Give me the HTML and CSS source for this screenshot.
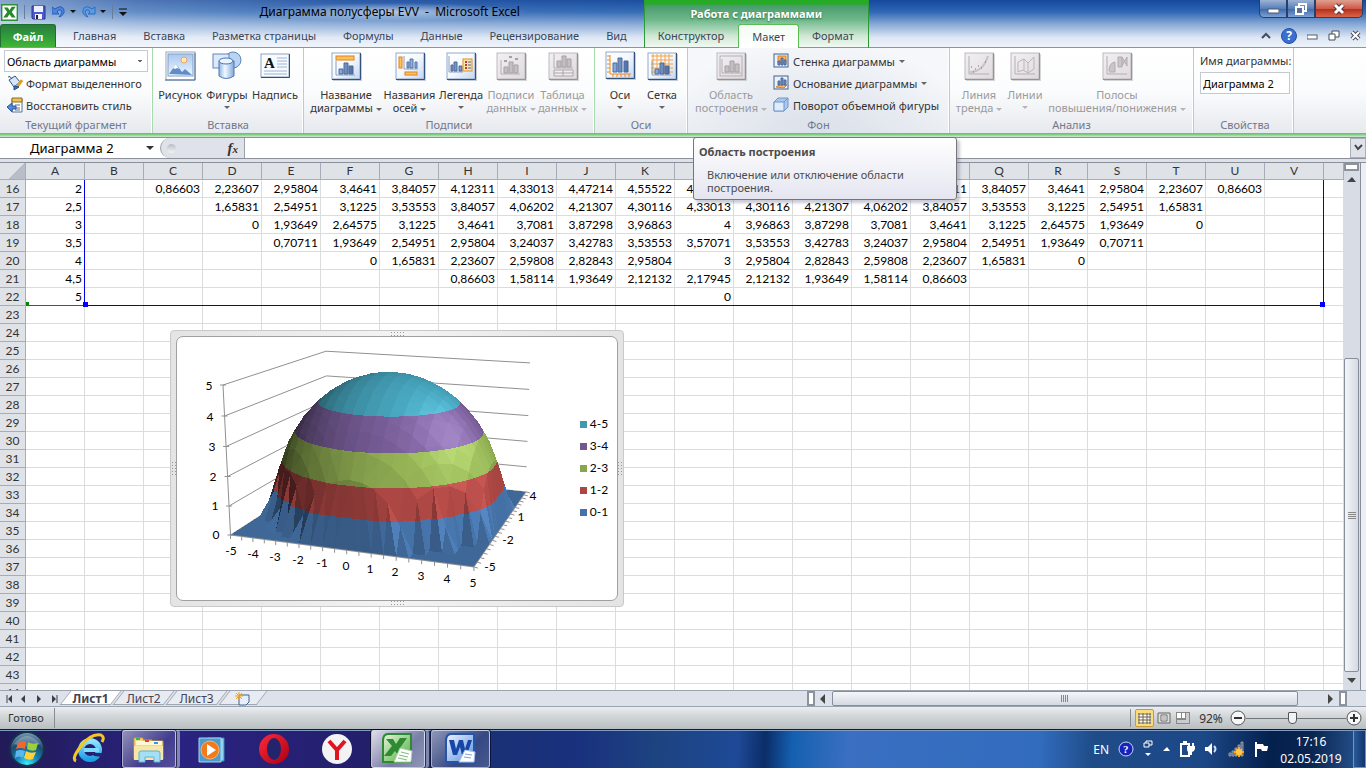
FILE: index.html
```html
<!DOCTYPE html>
<html lang="ru">
<head>
<meta charset="utf-8">
<title>Диаграмма полусферы EVV - Microsoft Excel</title>
<link rel="stylesheet" href="styles.css">
</head>
<body>
<svg class="defs" aria-hidden="true">
  <defs>
    <linearGradient id="gFrame" x1="0" y1="0" x2="1" y2="1"><stop offset="0" stop-color="#fff"/><stop offset=".5" stop-color="#f4f8fd"/><stop offset="1" stop-color="#c3d6f2"/></linearGradient>
    <linearGradient id="gOff" x1="0" y1="0" x2="1" y2="1"><stop offset="0" stop-color="#f3f0f3"/><stop offset="1" stop-color="#dedade"/></linearGradient>
    <linearGradient id="gBar" x1="0" y1="0" x2="1" y2="0"><stop offset="0" stop-color="#8fb0dc"/><stop offset="1" stop-color="#4d6ca3"/></linearGradient>
    <linearGradient id="gSky" x1="0" y1="0" x2="0" y2="1"><stop offset="0" stop-color="#a9c8f0"/><stop offset="1" stop-color="#eef6ff"/></linearGradient>
    <linearGradient id="gCyl" x1="0" y1="0" x2="1" y2="0"><stop offset="0" stop-color="#8fb4e3"/><stop offset=".4" stop-color="#f3f8ff"/><stop offset="1" stop-color="#7fa8dd"/></linearGradient>
    <linearGradient id="gX" x1="0" y1="0" x2="1" y2="1"><stop offset="0" stop-color="#e5f5dc"/><stop offset="1" stop-color="#4fae3c"/></linearGradient>
    <linearGradient id="gW" x1="0" y1="0" x2="1" y2="1"><stop offset="0" stop-color="#eef5ff"/><stop offset="1" stop-color="#5b8fdc"/></linearGradient>
    <radialGradient id="gOrb" cx=".5" cy=".95" r=".9"><stop offset="0" stop-color="#3ff0ff"/><stop offset=".35" stop-color="#1489bb"/><stop offset=".7" stop-color="#1d4a70"/><stop offset="1" stop-color="#6f93ad"/></radialGradient>
    <linearGradient id="gIE" x1="0" y1="0" x2="0" y2="1"><stop offset="0" stop-color="#8fe4ff"/><stop offset="1" stop-color="#1d9fe8"/></linearGradient>
    <linearGradient id="gOpera" x1="0" y1="0" x2="1" y2="1"><stop offset="0" stop-color="#ff2a39"/><stop offset="1" stop-color="#a80012"/></linearGradient>
    <g id="frame"><rect x="2" y="2" width="29" height="27" fill="#7f93ad" opacity=".45"/><rect x="1" y="1" width="28" height="26" fill="url(#gFrame)" stroke="#8da9cb"/><path d="M29.500 1V27.500H1" fill="none" stroke="#31527b"/></g>
    <g id="frameOff"><rect x="2" y="2" width="29" height="27" fill="#999" opacity=".4"/><rect x="1" y="1" width="28" height="26" fill="url(#gOff)" stroke="#bdb9bd"/><path d="M29.500 1V27.500H1" fill="none" stroke="#969296"/></g>
    <g id="bars"><path d="M0 0V14H19" fill="none" stroke="#8aa0bf"/><path d="M3 8h4v5h-4zM8 2h4v11h-4zM13 5h4v8h-4z" fill="url(#gBar)" stroke="#4c6898"/></g>
    <g id="barsOff"><path d="M0 0V14H19" fill="none" stroke="#b3afb3"/><path d="M3 7h4v6h-4zM8 2h4v11h-4zM13 5h4v8h-4z" fill="#c3bfc3" stroke="#a5a1a5"/></g>
    <g id="xl"><path d="M6 1H29V29H1V8Q1 1 6 1z" fill="url(#gX)" stroke="#2c8a32" stroke-width="2"/><path d="M4 6h7l3 5 4-6h7l-7 10 4 7h-6l-3-4-4 5H2l8-10z" fill="#2f8b31"/><path d="M18 15l12 3-1 11H12z" fill="#fff" stroke="#a9cfa5"/><path d="M19 19l8 2M17 22l9 2M16 25l9 2" stroke="#7dbb77"/></g>
  </defs>
</svg>

<header class="window-head">
  <div class="title-row">
    <div class="qat">
      <svg width="17" height="17" viewBox="0 0 30 30"><path d="M1 1H29V29H1z" fill="#fff" stroke="#2f8f35" stroke-width="3"/><path d="M5 6h7l3 5 4-6h7l-7 9 7 10h-7l-4-6-4 6H4l7-10z" fill="#258a2c"/></svg>
      <span class="qat-line"></span>
      <button aria-label="Сохранить"><svg width="15" height="15" viewBox="0 0 15 15"><path d="M1 1H14V14H2L1 13z" fill="#4d5bd0" stroke="#2a348f"/><path d="M3 1h9v6h-9z" fill="#e9f0fb"/><path d="M4 9h7v5h-7z" fill="#f2f4fa"/><path d="M5 10h2v4h-2z" fill="#223"/></svg></button>
      <button aria-label="Отменить"><svg width="24" height="14" viewBox="0 0 24 14"><path d="M0 2v7h7l-2-2q1-3 4-2 2 2-2 7 6-2 5-7-2-6-9-1z" fill="#4a84e0" stroke="#2a5cb8"/><path d="M18 5h6l-3 3z" fill="#111"/></svg></button>
      <button aria-label="Вернуть"><svg width="24" height="14" viewBox="0 0 24 14"><path d="M13 2v7H6l2-2Q7 4 4 5q-2 2 2 7Q0 10 1 5q2-6 9-1z" fill="#5a9be6" stroke="#2a6cc0"/><path d="M18 5h6l-3 3z" fill="#111"/></svg></button>
      <span class="qat-line"></span>
      <svg width="8" height="10" viewBox="0 0 8 10"><path d="M0 2H8" stroke="#111"/><path d="M0 5h8l-4 4z" fill="#111"/></svg>
    </div>
    <h1 class="title">Диаграмма полусферы EVV&nbsp; -&nbsp; Microsoft Excel</h1>
    <div class="win-buttons">
      <button class="wb" aria-label="Свернуть"><svg width="12" height="12"><rect x="1" y="6" width="11" height="4" fill="#fff" stroke="#4a5a78"/></svg></button>
      <button class="wb" aria-label="Восстановить"><svg width="12" height="12"><path d="M4 1h7v7h-7z" fill="none" stroke="#fff" stroke-width="2"/><path d="M1 4h7v7h-7z" fill="#587098" stroke="#fff" stroke-width="2"/></svg></button>
      <button class="wb wb-close" aria-label="Закрыть"><svg width="12" height="12"><path d="M2 2l8 8M10 2l-8 8" stroke="#5b3038" stroke-width="5"/><path d="M2 2l8 8M10 2l-8 8" stroke="#fff" stroke-width="3"/></svg></button>
    </div>
  </div>
  <nav class="tabs-row">
    <div class="tabs-main">
      <button class="tab file">Файл</button><button class="tab">Главная</button><button class="tab">Вставка</button><button class="tab">Разметка страницы</button><button class="tab">Формулы</button><button class="tab">Данные</button><button class="tab">Рецензирование</button><button class="tab">Вид</button>
    </div>
    <div class="context">
      <div class="context-title">Работа с диаграммами</div>
      <button class="tab">Конструктор</button><button class="tab active">Макет</button><button class="tab">Формат</button>
    </div>
    <div class="doc-buttons">
      <svg width="10" height="8"><path d="M1 6l4-4 4 4" fill="none" stroke="#444c58" stroke-width="2"/></svg>
      <button aria-label="Справка" class="help">?</button>
      <svg width="11" height="12"><rect x="0" y="5" width="10" height="4" fill="#fff" stroke="#555e6b"/></svg>
      <svg width="12" height="12"><path d="M4 1h7v6h-7z" fill="#fff" stroke="#454d5a"/><path d="M1 4h6v6h-6z" fill="#fff" stroke="#454d5a"/></svg>
      <svg width="11" height="12"><path d="M2 2l7 7M9 2l-7 7" stroke="#454d5a" stroke-width="4"/><path d="M2 2l7 7M9 2l-7 7" stroke="#fff" stroke-width="2"/></svg>
    </div>
  </nav>
</header>

<section class="ribbon">
  <div class="group g1">
    <select class="field" aria-label="Элемент диаграммы"><option>Область диаграммы</option></select>
    <button class="line-btn"><svg width="16" height="16"><path d="M2 5l6-4 5 6-6 5z" fill="#d6e6fa" stroke="#31527b"/><path d="M1 2q2-2 4 2" fill="none" stroke="#31527b"/><path d="M15 5l-5 7" stroke="#e0a020" stroke-width="3"/><path d="M7 11l5 1-5 3z" fill="#3d6fc4" stroke="#274b8c"/></svg>Формат выделенного</button>
    <button class="line-btn"><svg width="16" height="16"><path d="M5 2h10v13h-10z" fill="#fff" stroke="#5b7290"/><path d="M5 1h10v4h-10z" fill="#f1c14e" stroke="#8a6d20"/><path d="M8 8h5M8 11h5M8 13h5" stroke="#5b7290"/><path d="M0 10l5-4v3h4v3h-4v3z" fill="#4f8be0" stroke="#2a559c"/></svg>Восстановить стиль</button>
    <div class="group-name">Текущий фрагмент</div>
  </div>
  <div class="group g2">
    <div class="btns">
      <button class="big w44"><svg width="32" height="32"><rect x="2" y="2" width="29" height="28" fill="#fff" stroke="#8fa6c2"/><rect x="4" y="4" width="25" height="22" fill="url(#gSky)" stroke="#7e9cc6"/><circle cx="20" cy="10" r="3" fill="#ffe9b0" stroke="#f0a35e"/><path d="M5 24l7-10 6 8 3-3 7 6z" fill="#5f8dc7"/><path d="M9 18l3-4 3 5-2-1-2 1z" fill="#fff"/><path d="M1 30H31V3" fill="none" stroke="#4f6d92"/></svg><span>Рисунок</span></button>
      <button class="big w48"><svg width="32" height="32"><circle cx="22" cy="10" r="8" fill="#b9d3f4" stroke="#5f86b9"/><rect x="2" y="4" width="16" height="14" fill="#dce9fa" stroke="#5f86b9"/><path d="M8 11v15q7 5 15 0V11z" fill="url(#gCyl)" stroke="#4b76b2"/><ellipse cx="15" cy="11" rx="7" ry="3" fill="#eaf3ff" stroke="#4b76b2"/></svg><span>Фигуры</span><i class="arr"></i></button>
      <button class="big w48"><svg width="32" height="32"><rect x="2" y="4" width="28" height="23" fill="#f7fbff" stroke="#8da3bf"/><path d="M2 27.500H30.500V4" fill="none" stroke="#2f5077"/><text x="5" y="18" class="icon-a">A</text><path d="M18 8h10M18 11h10M18 14h10M18 17h10M5 21h23M5 24h23" stroke="#9fb4d2"/></svg><span>Надпись</span></button>
    </div>
    <div class="group-name">Вставка</div>
  </div>
  <div class="group g3">
    <div class="btns">
      <button class="big w72"><svg width="32" height="32"><use href="#frame" x="1" y="2"/><rect x="6" y="6" width="18" height="4" fill="#ffc35c" stroke="#e0801a"/><use href="#bars" x="6" y="11"/></svg><span>Название<br>диаграммы <i class="arr"></i></span></button>
      <button class="big w54"><svg width="32" height="32"><use href="#frame" x="1" y="2"/><rect x="5" y="7" width="3" height="11" fill="#ffc35c" stroke="#e0801a"/><rect x="11" y="22" width="12" height="3" fill="#ffc35c" stroke="#e0801a"/><path d="M10 6v13h14" fill="none" stroke="#8aa0bf"/><path d="M13 12h2v6h-2zM16 9h3v9h-3zM21 12h2v6h-2z" fill="#8fb0dc" stroke="#5573a6"/></svg><span>Названия<br>осей <i class="arr"></i></span></button>
      <button class="big w50"><svg width="32" height="32"><use href="#frame" x="1" y="2"/><path d="M4 6v16h14" fill="none" stroke="#8aa0bf"/><path d="M6 15h2v6h-2zM9 12h3v9h-3zM14 16h3v5h-3z" fill="#7796c6" stroke="#4c6898"/><rect x="18" y="9" width="9" height="12" fill="#ffe3a6" stroke="#e0901a"/><path d="M20 12h2M20 15h2M20 18h2" stroke="#c23b2e" stroke-width="2"/><path d="M23 12h3M23 15h3M23 18h3" stroke="#3c62a8"/></svg><span>Легенда</span><i class="arr"></i></button>
      <button class="big w50" disabled><svg width="32" height="32"><use href="#frameOff" x="1" y="2"/><use href="#barsOff" x="6" y="10"/><path d="M9 11h3M14 7h3M20 9h3" stroke="#a5a1a5" stroke-width="2"/></svg><span>Подписи<br>данных <i class="arr"></i></span></button>
      <button class="big w54" disabled><svg width="32" height="32"><use href="#frameOff" x="1" y="2"/><use href="#barsOff" x="7" y="4"/><path d="M7 20h19v6h-19zM7 23h19M16 20v6" fill="#eee" stroke="#aaa6aa"/></svg><span>Таблица<br>данных <i class="arr"></i></span></button>
    </div>
    <div class="group-name">Подписи</div>
  </div>
  <div class="group g4">
    <div class="btns">
      <button class="big w42"><svg width="32" height="32"><use href="#frame" x="1" y="1"/><path d="M6 5v19h21M3 6h3M3 10h3M3 14h3M3 18h3M3 22h3M9 24v3M13 24v3M17 24v3M21 24v3M25 24v3" fill="none" stroke="#f08a1c"/><path d="M9 13h4v9h-4zM14 8h4v14h-4zM20 11h4v11h-4z" fill="url(#gBar)" stroke="#4c6898"/></svg><span>Оси</span><i class="arr"></i></button>
      <button class="big w42"><svg width="32" height="32"><use href="#frame" x="1" y="2"/><path d="M7 4v20M11 4v20M15 4v20M19 4v20M23 4v20M5 6h22M5 10h22M5 14h22M5 18h22M5 22h22" stroke="#f5a246"/><use href="#bars" x="6" y="11"/></svg><span>Сетка</span><i class="arr"></i></button>
    </div>
    <div class="group-name">Оси</div>
  </div>
  <div class="group g5">
    <div class="btns">
      <button class="big w78" disabled><svg width="32" height="32"><use href="#frameOff" x="1" y="2"/><rect x="5" y="6" width="22" height="20" fill="none" stroke="#b3afb3"/><use href="#barsOff" x="7" y="9"/></svg><span>Область<br>построения <i class="arr"></i></span></button>
      <div class="stack">
        <button class="line-btn"><svg width="16" height="16"><rect x="1" y="1" width="14" height="13" fill="#eaf2fd" stroke="#41628f"/><rect x="5" y="3" width="8" height="7" fill="#ffb35c" stroke="#e0801a"/><path d="M5 8h2v4h-2zM8 5h2v7h-2zM11 7h2v5h-2z" fill="#6e8fc4" stroke="#4c6898"/></svg>Стенка диаграммы <i class="arr"></i></button>
        <button class="line-btn"><svg width="16" height="16"><rect x="1" y="1" width="14" height="13" fill="#eaf2fd" stroke="#41628f"/><path d="M3 12l3-2h8l-3 3z" fill="#ffb35c" stroke="#e0801a"/><path d="M5 6h2v4h-2zM8 3h2v7h-2zM11 5h2v5h-2z" fill="#6e8fc4" stroke="#4c6898"/></svg>Основание диаграммы <i class="arr"></i></button>
        <button class="line-btn"><svg width="16" height="16"><path d="M1 5l4-4h10v9l-4 4H1z" fill="#a9c8f0" stroke="#7295c4"/><path d="M1 5h10v9H1z" fill="#dfecfc" stroke="#7295c4"/><path d="M11 5l4-4" stroke="#7295c4"/></svg>Поворот объемной фигуры</button>
      </div>
    </div>
    <div class="group-name">Фон</div>
  </div>
  <div class="group g6">
    <div class="btns">
      <button class="big w50" disabled><svg width="32" height="32"><use href="#frameOff" x="1" y="2"/><path d="M6 6v18h20" fill="none" stroke="#b3afb3"/><path d="M7 22Q20 22 25 6" fill="none" stroke="#c6c2c6" stroke-width="2"/><path d="M8 17h1M12 19h1M15 16h1M10 22h1M18 18h1M22 12h1" stroke="#777"/></svg><span>Линия<br>тренда <i class="arr"></i></span></button>
      <button class="big w42" disabled><svg width="32" height="32"><use href="#frameOff" x="1" y="2"/><path d="M6 6v18h20" fill="none" stroke="#b3afb3"/><path d="M9 22v-10l6-3 4 4 6-6v12l-6 4-5-3zM15 9v11M19 13v10" fill="none" stroke="#b9b5b9"/></svg><span>Линии</span><i class="arr"></i></button>
      <button class="big w140" disabled><svg width="32" height="32"><use href="#frameOff" x="1" y="2"/><path d="M6 6v18h20" fill="none" stroke="#b3afb3"/><path d="M8 21q0-8 6-9v10h-6M17 7h4v10h-4zM21 7l5 9v-9l-5 9" fill="#c9c5c9" stroke="#b0acb0"/></svg><span>Полосы<br>повышения/понижения <i class="arr"></i></span></button>
    </div>
    <div class="group-name">Анализ</div>
  </div>
  <div class="group g7">
    <label for="chart-name">Имя диаграммы:</label>
    <input id="chart-name" class="field" value="Диаграмма 2">
    <div class="group-name">Свойства</div>
  </div>
</section>
<div class="ribbon-edge"></div>

<section class="formula-bar">
  <button class="name-box"><span>Диаграмма 2</span><i class="arr dark"></i></button>
  <div class="fx-zone"><span class="dot"></span><button class="fx" aria-label="Вставить функцию">f<sub>x</sub></button></div>
  <input class="formula" aria-label="Строка формул">
  <button class="expand" aria-label="Развернуть"><svg width="9" height="8"><path d="M1 1l3 4 4-4" fill="none" stroke="#444" stroke-width="2"/></svg></button>
</section>

<main class="work">
  <div class="sheet">
    <table class="grid"><thead><tr id="cols"></tr></thead><tbody id="rows"></tbody></table>
    <div class="range range-x"></div>
    <div class="range range-data"><i></i><i></i></div>
    <div class="chart">
      <span class="grip t"></span><span class="grip b"></span><span class="grip l"></span><span class="grip r"></span>
      <svg id="plot" class="plot" viewBox="177 337 440 263" role="img" aria-label="Полусфера"></svg>
    </div>
  </div>
  <div class="vscroll">
    <span class="split"></span>
    <button class="sb" aria-label="Вверх"><svg width="9" height="6"><path d="M0 5h9l-4-5z" fill="#444"/></svg></button>
    <div class="track"><div class="thumb"></div></div>
    <button class="sb" aria-label="Вниз"><svg width="9" height="6"><path d="M0 0h9l-4 5z" fill="#444"/></svg></button>
  </div>
</main>

<div class="sheet-bar">
  <div class="nav-btns">
    <svg width="56" height="10"><path d="M2 1v8M52 1v8" stroke="#3a4048"/><path d="M7 1v8l-4-4zM20 1v8l-4-4zM32 1v8l4-4zM47 1v8l4-4z" fill="#3a4048"/></svg>
  </div>
  <button class="sheet-tab current">Лист1</button><button class="sheet-tab">Лист2</button><button class="sheet-tab">Лист3</button><button class="sheet-tab new" aria-label="Вставить лист"><svg width="16" height="14"><path d="M4 3h10v7l-3 3H4z" fill="#e6effb" stroke="#41628f"/><path d="M4 0v8M0 4h8M1 1l6 6M7 1l-6 6" stroke="#f0a020"/></svg></button>
  <div class="fill"></div>
  <div class="hscroll">
    <span class="hsplit"></span>
    <button class="hb" aria-label="Влево"><svg width="6" height="10"><path d="M5 0v10l-5-5z" fill="#444"/></svg></button>
    <div class="htrack"><div class="hthumb"></div></div>
    <button class="hb" aria-label="Вправо"><svg width="6" height="10"><path d="M0 0v10l5-5z" fill="#444"/></svg></button>
    <span class="hsplit"></span>
  </div>
</div>

<div class="status">
  <span class="ready">Готово</span>
  <div class="views">
    <button class="on" aria-label="Обычный"><svg width="13" height="11"><path d="M0 0h13v11H0z" fill="#fff"/><path d="M0 1h13M0 4h13M0 7h13M0 10h13M1 0v11M5 0v11M9 0v11M12 0v11" stroke="#6c6244"/></svg></button>
    <button aria-label="Разметка"><svg width="14" height="12"><path d="M1 1h12v10H1z" fill="#ddd" stroke="#666"/><path d="M4 3h6v6h-6z" fill="#fff" stroke="#666"/><path d="M5 5h4M5 7h4" stroke="#888"/></svg></button>
    <button aria-label="Страничный"><svg width="14" height="12"><path d="M0 0h14v12H0z" fill="#888"/><path d="M1 1h4v5H1zM6 1h3v5H6z" fill="#fff"/><path d="M10 1h3v10H1V8h9z" fill="#ccc"/></svg></button>
  </div>
  <span class="pct">92%</span>
  <button class="zoom-btn" aria-label="Уменьшить"><svg width="16" height="16"><circle cx="8" cy="8" r="7" fill="#f5f6f8" stroke="#555"/><path d="M4 8h8" stroke="#333" stroke-width="2"/></svg></button>
  <input class="zoom" type="range" min="10" max="190" value="94" aria-label="Масштаб">
  <button class="zoom-btn" aria-label="Увеличить"><svg width="16" height="16"><circle cx="8" cy="8" r="7" fill="#f5f6f8" stroke="#555"/><path d="M4 8h8M8 4v8" stroke="#333" stroke-width="2"/></svg></button>
</div>

<footer class="taskbar">
  <button class="start" aria-label="Пуск"><svg width="38" height="38"><circle cx="19" cy="19" r="17" fill="url(#gOrb)" stroke="#17304b" stroke-width="2"/><path d="M6 14q13-16 26 0-13 5-26 0z" fill="#fff" opacity=".25"/><path d="M10 13q5-3 8-1l-1 7q-5-2-9 0z" fill="#f2672b"/><path d="M20 12q4 3 10 1l-2 7q-4 2-9-1z" fill="#9bd03c"/><path d="M8 21q4-2 9 0l-2 7q-4-3-8 0z" fill="#5db7ef"/><path d="M18 21q4 3 10 1l-3 7q-4 2-9-1z" fill="#ffd23c"/></svg></button>
  <button class="app" aria-label="Internet Explorer"><svg width="34" height="34"><circle cx="18" cy="18" r="9" fill="none" stroke="url(#gIE)" stroke-width="6"/><path d="M12 18h15" stroke="#7edbff" stroke-width="4"/><path d="M20 21h10v4l-8-1z" fill="#25276f"/><path d="M4 29Q-1 27 9 14T29 3q4 2 1 7" fill="none" stroke="#f6c81e" stroke-width="3"/></svg></button>
  <button class="app open double" aria-label="Проводник"><svg width="34" height="34"><path d="M2 6h9v2h9v1h11v18H2z" fill="#f3d889" stroke="#c79c3e"/><path d="M4 9h26v4H4z" fill="#fff7d6"/><path d="M4 6h4v2h-4z" fill="#3b4"/><path d="M13 8h4v2h-4z" fill="#d43"/><path d="M22 10h4v2h-4z" fill="#39e"/><path d="M2 14h29v14H2z" fill="#f8e6a4"/><path d="M7 30v-9q0-2 2-2h17q2 0 2 2v9h-6v-5h-9v5z" fill="#a5dff5" stroke="#59b3dc"/></svg></button>
  <button class="app" aria-label="Проигрыватель"><svg width="34" height="34"><path d="M14 6h16v23H14z" fill="#8ed0ee" stroke="#3b8ab8"/><path d="M5 6h22v24H5z" fill="#4d9ccb" stroke="#9fd8f2"/><circle cx="16" cy="18" r="9" fill="#f17a1c" stroke="#ffb36b"/><path d="M13 12v12l9-6z" fill="#fff"/></svg></button>
  <button class="app" aria-label="Opera"><svg width="34" height="34"><ellipse cx="17" cy="17" rx="15" ry="15" fill="url(#gOpera)"/><ellipse cx="17" cy="17" rx="7" ry="11" fill="#24246c"/></svg></button>
  <button class="app" aria-label="Яндекс"><svg width="34" height="34"><circle cx="17" cy="17" r="15" fill="#f3f2f4"/><path d="M9 9l8 9 8-9M17 17v11" fill="none" stroke="#e0141e" stroke-width="4"/></svg></button>
  <button class="app open double bright" aria-label="Excel"><svg width="32" height="32"><use href="#xl"/></svg></button>
  <button class="app open" aria-label="Word"><svg width="32" height="32"><path d="M6 1H29V29H1V8Q1 1 6 1z" fill="url(#gW)" stroke="#2555a8" stroke-width="2"/><path d="M4 7h5l2 9 3-9h4l2 9 3-9h4l-5 15h-5l-2-8-3 8H8z" fill="#1747a6"/><path d="M20 17l10 2-1 10H14z" fill="#fff" stroke="#a6bfe8"/><path d="M20 21l7 1M19 24l7 1" stroke="#7fa2dc"/></svg></button>
  <div class="fill"></div>
  <div class="tray">
    <span class="lang">EN</span>
    <svg width="16" height="16"><circle cx="8" cy="8" r="7" fill="#1622b8" stroke="#c7d4ff"/><text x="5" y="12" class="q">?</text></svg>
    <svg width="10" height="18"><path d="M3 1h6v4h-6z" fill="none" stroke="#fff"/><path d="M1 3h5v4h-5z" fill="#1d4888" stroke="#fff"/><path d="M2 13h6l-3 3z" fill="#fff"/></svg>
    <svg width="9" height="8"><path d="M1 6h7l-3-4z" fill="#fff"/></svg>
    <svg width="15" height="16"><path d="M1 3h8v12H1z" fill="none" stroke="#fff" stroke-width="2"/><path d="M3 1h4M9 2v3M13 2v3" stroke="#fff" stroke-width="2"/><path d="M7 5h8v3q-1 3-3 3v3H8v-3q-1-1-1-3z" fill="#fff"/></svg>
    <svg width="15" height="16"><path d="M1 6h3l4-4v12l-4-4H1z" fill="#fff"/><path d="M10 5q3 3 0 6" fill="none" stroke="#cfe0f6" stroke-width="2"/></svg>
    <svg width="17" height="16"><path d="M1 12h2v3H1zM4 10h2v5h-2zM7 7h2v8h-2zM10 4h2v11h-2zM13 1h2v14h-2z" fill="#5b6672" stroke="#8e99a6"/><path d="M11 6v10M6 11h10M8 8l6 6M14 8l-6 6" stroke="#ffa41c" stroke-width="2"/><circle cx="11" cy="11" r="3" fill="#ffc94a"/></svg>
    <svg width="15" height="16"><path d="M2 1v15" stroke="#fff" stroke-width="2"/><path d="M3 3h6l1 2h4v1l-1 4h-5l-1-2h-4z" fill="#fff"/></svg>
  </div>
  <div class="clock"><div>17:16</div><div>02.05.2019</div></div>
  <div class="peek"></div>
</footer>

<div class="tooltip" role="tooltip"><b>Область построения</b><p>Включение или отключение области построения.</p></div>
<script src="script.js"></script>
</body>
</html>
```
FILE: styles.css
```css
* { box-sizing: border-box; }
body { margin: 0; height: 100vh; display: flex; flex-direction: column; overflow: hidden; font: 11px/13px "Noto Sans", "Open Sans", sans-serif; color: #333; background: #dde2ea; }
button, input, select { font: inherit; color: inherit; }
button { border: 0; padding: 0; background: none; }
svg { display: block; flex: none; }
.defs { position: absolute; width: 0; height: 0; }
.fill { flex: 1; }

.window-head { flex: none; background: linear-gradient(90deg, rgba(255,255,255,.5) 0, rgba(255,255,255,.25) 10%, rgba(255,255,255,.1) 25%, rgba(255,255,255,.05) 40%, rgba(0,60,170,0) 60%), linear-gradient(#14489c 0, #3068b4 25%, #86a8d6 50%, #dce6f4 78%, #f1f5fb 100%); }
.title-row { height: 24px; display: flex; align-items: center; }
.qat { display: flex; align-items: center; gap: 6px; padding-left: 1px; flex: 3; }
.qat-line { width: 1px; height: 14px; background: #6a7c98; }
.title { margin: 0; font-weight: 400; font-size: 12px; line-height: 18px; color: #000; padding: 0 8px; border-radius: 9px; background: radial-gradient(closest-side, rgba(255,255,255,.6), rgba(255,255,255,0)); }
.win-buttons { flex: 10; display: flex; justify-content: flex-end; align-self: flex-start; padding-right: 3px; }
.wb { height: 18px; width: 28px; display: flex; align-items: center; justify-content: center; background: linear-gradient(#9db3d4, #587fb8 50%, #3b68aa 52%, #7ea1d2); border: 1px solid #26406e; border-top: 0; }
.wb:first-child { border-radius: 0 0 0 5px; }
.wb-close { width: 48px; background: linear-gradient(#e0a090, #cf5a48 50%, #b42c18 52%, #d8664a); border-radius: 0 0 5px 0; }

.tabs-row { display: flex; height: 24px; border-bottom: 1px solid #5bbb54; }
.tabs-main { display: flex; padding-right: 3px; }
.tab { height: 23px; padding: 0 14px 0 13px; white-space: nowrap; color: #3b4657; }
.file { width: 56px; height: 23px; margin-right: 4px; padding: 0; color: #fff; font-weight: 700; border-radius: 3px 3px 0 0; background: linear-gradient(#2b7d3b, #2f9a3c 50%, #42b536); border: 1px solid #1f7030; border-bottom: 0; }
.context { position: relative; display: flex; min-width: 223px; margin-top: -24px; padding-top: 24px; height: 48px; border: solid #2a9c33; border-width: 0 1px; background: linear-gradient(#25ab25 0, #25ab25 4px, #4a9c6c 6px, #6fb98c 20px, #cfe8d4 36px, #f1f8f3 47px, #5bbb54 47px); }
.context-title { position: absolute; inset: 7px 0 auto; text-align: center; color: #fff; font-weight: 700; text-shadow: 0 1px 2px #2a6b3c; }
.context .tab { padding: 0 14px 0 13px; }
.context .active { height: 24px; padding: 0 13px; background: linear-gradient(#f4fbf4, #fff); border: 1px solid #5bbb54; border-bottom: 0; border-radius: 3px 3px 0 0; }
.doc-buttons { flex: 1; display: flex; gap: 10px; justify-content: flex-end; align-items: center; padding-right: 5px; }
.help { width: 16px; height: 16px; border-radius: 8px; background: #3a6fd0; border: 1px solid #2650a4; color: #fff; font-weight: 700; line-height: 14px; font-size: 12px; }

.ribbon { flex: none; display: flex; height: 85px; background: linear-gradient(#fff, #fbfcfd 50%, #e6e9ee); }
.group { position: relative; display: flex; flex-direction: column; padding: 2px 4px 0; border-right: 1px solid #a9d9ae; box-shadow: inset -1px 0 #fff; }
.group-name { margin-top: auto; height: 15px; text-align: center; color: #70788a; }
.g1 { width: 153px; }
.g2 { width: 151px; }
.g3 { width: 291px; }
.g4 { width: 93px; }
.g5 { width: 262px; background: radial-gradient(ellipse at 50% 100%, #dbe1ea, rgba(240,243,247,.6) 80%); }
.g6 { width: 244px; }
.g7 { width: 100px; padding: 6px 3px 0 6px; }
.btns { display: flex; justify-content: center; }
.g5 .btns, .g6 .btns { justify-content: flex-start; }
.big { display: flex; flex-direction: column; align-items: center; flex: none; white-space: nowrap; }
.big span { margin-top: 6px; text-align: center; }
.big > .arr { margin-top: 5px; }
.w42 { width: 42px; } .w44 { width: 46px; } .w48 { width: 48px; } .w50 { width: 50px; } .w54 { width: 53px; } .w72 { width: 74px; } .w78 { width: 78px; } .w140 { width: 142px; }
.big:disabled { color: #9a9a9e; }
.arr { display: inline-block; border: solid transparent; border-width: 3px 3px 0; border-top-color: #666; vertical-align: middle; }
:disabled .arr { border-top-color: #b5b5b8; }
.arr.dark { border-width: 4px 4px 0; border-top-color: #333; }
.icon-a { font: 700 15px "Liberation Serif", serif; fill: #111; }
.field { height: 22px; border: 1px solid #c5cad2; background: #fff; color: #000; padding: 0 2px; border-radius: 0; width: 100%; }
.line-btn { display: flex; align-items: center; gap: 3px; height: 22px; padding-left: 3px; white-space: nowrap; }
.stack .line-btn { gap: 4px; }
.g7 label { margin-bottom: 5px; white-space: nowrap; }
select.field { appearance: none; background: linear-gradient(to top left, transparent 50%, #666 51%) right 4px center / 3px 3px no-repeat, linear-gradient(to top right, transparent 50%, #666 51%) right 7px center / 3px 3px no-repeat, #fff; }
.ribbon-edge { flex: none; height: 4px; background: linear-gradient(#7cab82, #7fd083 40%, #d3e8d6); }

.formula-bar { flex: none; display: flex; height: 22px; border: solid #8b909b; border-width: 1px 0; background: #fff; margin-bottom: 4px; }
.name-box { width: 160px; display: flex; align-items: center; font-size: 13px; color: #000; padding: 0 6px 0 30px; justify-content: space-between; }
.fx-zone { width: 85px; display: flex; align-items: center; justify-content: space-between; padding: 0 6px; background: #dfe3e9; border: 1px solid #9aa0ab; border-width: 0 1px; border-radius: 10px 0 0 10px; }
.dot { width: 9px; height: 9px; border-radius: 5px; background: linear-gradient(#b9bdc4, #f2f4f7); }
.fx { font: italic 700 15px "Liberation Serif", serif; color: #333; }
.fx sub { font-size: 11px; vertical-align: baseline; }
.formula { flex: 1; border: 0; }
.expand { width: 16px; display: grid; place-items: center; background: #dfe3e9; border: 1px solid #aab0ba; }

.work { flex: 1; min-height: 0; display: flex; background: #eceef4; padding-right: 5px; border-top: 1px solid #8b8f98; margin-top: -1px; }
.sheet { flex: 1; min-width: 0; position: relative; overflow: hidden; background: #fff; }
.grid { width: 100%; table-layout: fixed; border-collapse: separate; border-spacing: 0; font: 12px/17px Lato, sans-serif; color: #000; }
.grid th { height: 17px; padding: 0; font-weight: 400; color: #333; background: #dfe3e8; border: solid #a6adb8; border-width: 0 1px 1px 0; line-height: 16px; }
.grid th.corner { width: 26px; background: linear-gradient(135deg, #dfe3e8 60%, #b8bec8 60%); }
.grid th.col { width: 59px; }
.grid tbody th { height: 18px; font-size: 12px; line-height: 17px; }
.grid td { height: 18px; padding: 0 2px 0 0; text-align: right; border: solid #dadcdd; border-width: 0 1px 1px 0; }
.range { position: absolute; top: 17px; height: 126px; pointer-events: none; }
.range-x { left: 26px; width: 59px; border-bottom: 1px solid #080; }
.range-x::before { content: ""; position: absolute; left: 0; bottom: -1px; width: 3px; height: 4px; background: #080; }
.range-data { left: 84px; width: 1240px; border: solid #0000e0; border-width: 0 1px 1px; }
.range-data i { position: absolute; bottom: -2px; width: 5px; height: 5px; background: #00f; }
.range-data i:first-child { left: -2px; }
.range-data i:last-child { right: -2px; }

.chart { position: absolute; left: 170px; top: 167px; width: 454px; height: 277px; padding: 5px; background: linear-gradient(90deg, #e4e4e4, #f3f3f3 50%, #e4e4e4); border: 1px solid #c9c9c9; border-radius: 4px; }
.plot { width: 442px; height: 265px; background: #fff; border: 1px solid #a0a0a0; border-radius: 7px; }
.grip { position: absolute; background: radial-gradient(#999 1px, transparent 1px) 0 0 / 3px 3px; }
.grip.t, .grip.b { width: 15px; height: 6px; left: 219px; }
.grip.t { top: 0; } .grip.b { bottom: 0; }
.grip.l, .grip.r { width: 6px; height: 15px; top: 130px; }
.grip.l { left: 0; } .grip.r { right: 0; }
.plot text { font: 12px Lato, sans-serif; fill: #000; }

.vscroll { width: 17px; display: flex; flex-direction: column; background: #d8dde5; border-right: 1px solid #868d99; padding-right: 1px; }
.split { height: 8px; border: 2px solid #8d939e; background: #fff; }
.sb { height: 18px; display: grid; place-items: center; }
.track { flex: 1; display: flex; flex-direction: column; padding: 169px 0 0; }
.thumb { flex: 1; border: 1px solid #868e9b; border-radius: 2px; background: repeating-linear-gradient(#888 0 1px, transparent 1px 2px) center / 8px 7px no-repeat, linear-gradient(90deg, #f4f6f9, #d5d9e1); }

.sheet-bar { flex: none; display: flex; height: 17px; border: solid #9aa3b0; border-width: 1px 0; background: #dde2ea; padding-right: 19px; }
.nav-btns { width: 64px; padding: 3px 0 0 5px; }
.sheet-tab { position: relative; width: 53px; line-height: 15px; z-index: 1; font-size: 12px; color: #445; }
.sheet-tab::before { content: ""; position: absolute; inset: 0 1px 1px; z-index: -1; background: #e8ebf1; border: 1px solid #a0a7b3; border-top: 0; transform: skewX(-38deg); }
.sheet-tab.current { font-weight: 700; }
.current::before { background: #fff; }
.new { width: 40px; display: grid; place-items: center; }
.hscroll { display: flex; width: 540px; }
.hsplit { width: 8px; border: 2px solid #8d939e; background: #fff; }
.hb { width: 16px; display: grid; place-items: center; }
.htrack { flex: 1; padding: 0 25px 0 1px; display: flex; }
.hthumb { flex: 1; border: 1px solid #868e9b; border-radius: 2px; background: repeating-linear-gradient(90deg, #888 0 1px, transparent 1px 2px) center / 8px 7px no-repeat, linear-gradient(#f4f6f9, #d5d9e1); }

.status { flex: none; display: flex; align-items: center; height: 22px; padding-right: 4px; background: linear-gradient(#eceef1, #d3d7da 40%, #b9bec1); }
.ready { width: 55px; padding-left: 8px; line-height: 20px; border-right: 1px solid #878c92; }
.views { margin-left: auto; display: flex; border-left: 1px solid #878c92; padding-left: 4px; }
.views button { width: 19px; height: 18px; display: grid; place-items: center; border: 1px solid transparent; }
.views .on { background: #fbdc7c; border-color: #c59a3c; border-radius: 2px; }
.pct { width: 38px; text-align: center; font-size: 12px; }
.zoom { appearance: none; width: 100px; height: 16px; margin: 0; background: linear-gradient(#70757c, #70757c) center / 100% 1px no-repeat; }
.zoom::-webkit-slider-thumb { appearance: none; width: 9px; height: 12px; background: #f0f2f5; border: 1px solid #555; border-radius: 1px 1px 4px 4px; }

.taskbar { flex: none; display: flex; height: 39px; border-top: 1px solid #10202f; box-shadow: inset 0 1px #7f9cc4; background: linear-gradient(93deg, #221b58 0, #2a2382 13%, #231f6b 27%, #1c3070 32%, #19307e 42%, #1d4380 48%, #1e4996 54%, #0b2d68 56%, #1560b0 58%, #3a6fc2 62%, #326cbe 76%, #1f4c88 80%, #1d4888 88%, #04204c 93%, #0a2550 96%, #2a5a98 100%); }
.start { width: 53px; display: grid; place-items: center; }
.app { width: 58px; margin-right: 5px; height: 38px; display: grid; place-items: center; border-radius: 3px; }
.start + .app { width: 67px; margin-right: 0; margin-left: 2px; }
.open { width: 59px; border: 1px solid rgba(220,225,245,.65); background: linear-gradient(135deg, rgba(255,255,255,.5), rgba(255,255,255,.12) 60%, rgba(255,255,255,.2)); box-shadow: 0 0 0 1px rgba(5,8,30,.7); }
.double { width: 54px; margin-right: 6px; box-shadow: 0 0 0 1px rgba(5,8,30,.7), 4px 0 0 rgba(220,225,245,.5); }
.bright { background: linear-gradient(135deg, rgba(255,255,255,.85), rgba(255,255,255,.4) 60%, rgba(255,255,255,.5)); }
.tray { display: flex; align-items: center; gap: 9px; color: #fff; font-size: 12px; }
.q { font: 700 11px "Liberation Serif", serif; fill: #fff; }
.clock { width: 84px; text-align: center; color: #fff; font-size: 12px; line-height: 17px; padding-top: 3px; }
.peek { width: 13px; border: 1px solid #6f93c4; background: linear-gradient(90deg, #2a5a98, #12356c); }

.tooltip { position: absolute; left: 693px; top: 137px; width: 264px; padding: 7px 5px 5px; border: 1px solid #767676; border-radius: 3px; background: linear-gradient(#fff, #e4e5f0); box-shadow: 3px 3px 3px rgba(80,80,120,.3); z-index: 5; color: #4c4c4c; }
.tooltip p { margin: 10px 30px 0 8px; }
```
FILE: script.js
```js
const R2 = 25;
const height = (x, y) => { const s = R2 - x * x - y * y; return s < 0 ? null : Math.sqrt(s); };
const format = v => String(Number(v.toFixed(5))).replace(".", ",");

/* worksheet */
const cols = document.getElementById("cols");
const rows = document.getElementById("rows");
const letters = "ABCDEFGHIJKLMNOPQRSTUV".split("");
cols.innerHTML = '<th class="corner"></th>' + letters.map(l => `<th class="col">${l}</th>`).join("") + "<th></th>";
for (let r = 16; r <= 44; r++) {
  const y = (r - 12) / 2;
  let html = `<th>${r}</th>`;
  for (let c = 0; c <= 22; c++) {
    let text = "";
    if (r <= 22 && c === 0) text = format(y);
    else if (r <= 22 && c <= 21) {
      const v = height((c - 11) / 2, y);
      if (v !== null) text = format(v);
    }
    html += `<td>${text}</td>`;
  }
  rows.insertAdjacentHTML("beforeend", `<tr>${html}</tr>`);
}

/* 3-D surface chart */
const svg = [];
const depth = (u, v, w) => 1 - .087 * u + .257 * v - .04 * w;
const project = (x, y, z) => {
  const u = (x + 5) / 10, v = (y + 5) / 10, w = z / 5, d = depth(u, v, w);
  return [(230.5 + 202.2 * u + 182.6 * v - 16.4 * w) / d, (535 - 17.3 * u + 57.8 * v - 165.4 * w) / d];
};
const pt = p => p.map(n => n.toFixed(1)).join(",");
const line = (...ps) => svg.push(`<polyline points="${ps.map(pt).join(" ")}" fill="none" stroke="#909090"/>`);

for (let z = 0; z <= 5; z++) line(project(-5, -5, z), project(-5, 5, z), project(5, 5, z));

const bands = [[69, 114, 167], [170, 70, 67], [137, 165, 78], [113, 88, 143], [65, 152, 175]];
const light = [.64, -.38, .67];
const clip = (poly, z, above) => {
  const out = [];
  poly.forEach((a, i) => {
    const b = poly[(i + 1) % poly.length];
    const ia = above ? a[2] >= z : a[2] <= z, ib = above ? b[2] >= z : b[2] <= z;
    if (ia) out.push(a);
    if (ia !== ib) {
      const t = (z - a[2]) / (b[2] - a[2]);
      out.push([a[0] + (b[0] - a[0]) * t, a[1] + (b[1] - a[1]) * t, z]);
    }
  });
  return out;
};
const face = tri => {
  const [a, b, c] = tri;
  const p = b.map((n, i) => n - a[i]), q = c.map((n, i) => n - a[i]);
  const n = [p[1] * q[2] - p[2] * q[1], p[2] * q[0] - p[0] * q[2], p[0] * q[1] - p[1] * q[0]];
  const len = Math.hypot(...n) * (n[2] < 0 ? -1 : 1);
  const dot = Math.max(0, n.reduce((s, v, i) => s + v * light[i], 0) / len);
  const shade = .4 + .76 * dot, spec = 30 * Math.pow(dot, 24);
  bands.forEach((rgb, i) => {
    let poly = clip(tri, i, true);
    if (i < 4 && poly.length) poly = clip(poly, i + 1, false);
    if (poly.length < 3) return;
    const color = rgb.map(v => Math.min(255, Math.round(v * shade + spec))).join(",");
    svg.push(`<polygon points="${poly.map(v => pt(project(...v))).join(" ")}" fill="rgb(${color})"/>`);
  });
};
const cells = [];
for (let i = 0; i < 20; i++) for (let j = 0; j < 20; j++) cells.push([-5 + i / 2, -5 + j / 2]);
cells.sort((a, b) => (b[1] * 257 - b[0] * 87) - (a[1] * 257 - a[0] * 87));
svg.push('<g shape-rendering="crispEdges">');
for (const [x, y] of cells) {
  const v = (i, j) => [x + i / 2, y + j / 2, height(x + i / 2, y + j / 2) || 0];
  const a = v(0, 0), b = v(1, 0), c = v(1, 1), d = v(0, 1);
  if (a[2] + c[2] > b[2] + d[2]) { face([a, c, d]); face([a, b, c]); }
  else { face([b, c, d]); face([a, b, d]); }
}
svg.push("</g>");

line(project(-5, -5, 5), project(-5, -5, 0), project(5, -5, 0), project(5, 5, 0));
for (let z = 0; z <= 5; z++) { const [a, b] = project(-5, -5, z); line([a - 3, b], [a + 3, b]); }
for (let i = 0; i <= 20; i++) {
  const [a, b] = project(-5 + i / 2, -5, 0); line([a, b], [a, b + 4]);
  const [c, d] = project(5, -5 + i / 2, 0); line([c, d], [c + 4, d + 1]);
}
const label = (x, y, t) => svg.push(`<text x="${x}" y="${y}" text-anchor="middle">${t}</text>`);
[[216, 539], [215, 510], [213, 481], [212, 451], [210, 421], [209, 390]].forEach(([x, y], i) => label(x, y, i));
[[231, 555], [253, 558], [275, 561], [298, 564], [322, 567], [346, 570], [370, 573], [395, 576], [421, 580], [447, 583], [473, 587]].forEach(([x, y], i) => label(x, y, i - 5));
[[490, 571, -5], [508, 544, -2], [521, 521, 1], [533, 500, 4]].forEach(a => label(...a));
["4-5", "3-4", "2-3", "1-2", "0-1"].forEach((t, i) => {
  const y = 424 + i * 22;
  svg.push(`<rect x="580" y="${y - 3}" width="7" height="7" fill="rgb(${bands[4 - i]})"/>`);
  label(599, y + 4, t);
});
document.getElementById("plot").innerHTML = svg.join("");
```
